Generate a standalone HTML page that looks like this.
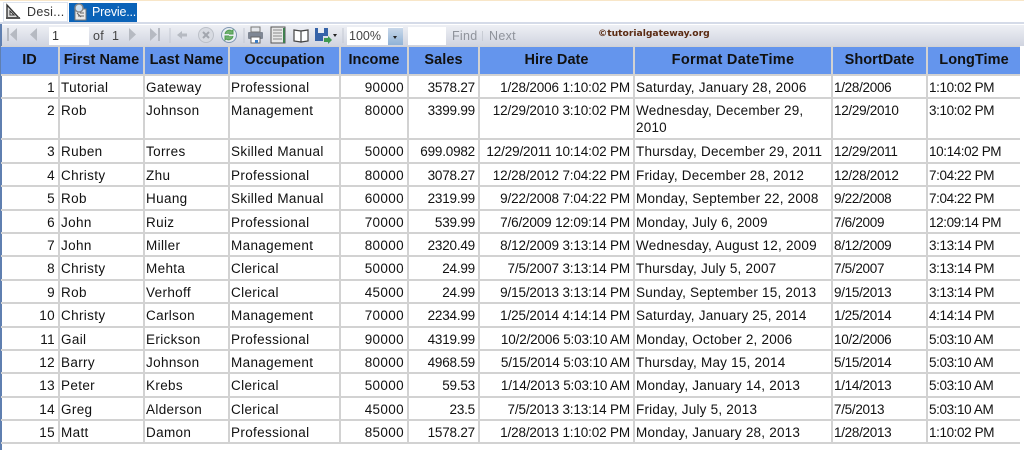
<!DOCTYPE html>
<html><head><meta charset="utf-8">
<style>
html,body{margin:0;padding:0;width:1024px;height:450px;overflow:hidden;background:#fff;font-family:"Liberation Sans",sans-serif}
.a{position:absolute}
table{position:absolute;left:1px;top:46px;border-collapse:collapse;table-layout:fixed;width:1019px;font-size:13.5px;letter-spacing:.35px;color:#111}
td,th{border:2px solid #d2d2d2;padding:3px 3px 0 1px;vertical-align:top;line-height:17px;overflow:hidden;white-space:nowrap;box-sizing:border-box}
th{background:#6495ed;font-size:14.5px;font-weight:bold;text-align:center;vertical-align:middle;padding:0;border-top:1px solid #d2d2d2;letter-spacing:.05px}
tr>*:first-child{border-left:0}
tr>*:last-child{border-right:0}
th:nth-child(8){letter-spacing:.3px}
td:nth-child(6){letter-spacing:-.2px}
td:nth-child(7){letter-spacing:-.15px}
td:nth-child(8){letter-spacing:.22px}
td:nth-child(9){letter-spacing:-.3px}
td:nth-child(10){letter-spacing:-.4px}
.r{text-align:right}
.w{white-space:normal}
tr{height:23.4px}
tr.h{height:28px}
tr.t{height:41.5px}
</style></head><body>
<div class="a" style="left:0;top:0;width:1024px;height:1px;background:#f8e6c8"></div>
<div class="a" style="left:0;top:22px;width:1024px;height:2px;background:#d5dbe8"></div>
<div class="a" style="left:0;top:24px;width:2px;height:426px;background:#5f7fb0"></div>
<!-- tabs -->
<div class="a" style="left:3px;top:2px;width:65px;height:20px;background:#fff;border:1px solid #dde3ee;box-sizing:border-box"></div>
<svg class="a" style="left:5px;top:3px" width="17" height="17" viewBox="0 0 17 17"><path d="M2 15V2l12 13z" fill="#ddd" stroke="#333" stroke-width="1.4"/><path d="M5 12V8l4 4z" fill="#fff" stroke="#333"/><rect x="1" y="14" width="14" height="2" fill="#555"/></svg>
<div class="a" style="left:27px;top:5px;font-size:12.5px;color:#333;letter-spacing:.3px">Desi...</div>
<div class="a" style="left:69px;top:3px;width:68px;height:19px;background:#0b63b8"></div>
<svg class="a" style="left:71px;top:3px" width="18" height="18" viewBox="0 0 18 18"><rect x="4" y="6" width="11" height="11" fill="#e8e8e8" stroke="#777"/><circle cx="8" cy="5" r="4" fill="#cfe0f0" stroke="#888" stroke-width="1.4"/><path d="M6 10l4 4M7 13h6M9 10h4" stroke="#666"/></svg>
<div class="a" style="left:92px;top:5px;font-size:12.5px;color:#fff;letter-spacing:-.2px">Previe...</div>
<!-- toolbar -->
<div class="a" style="left:2px;top:25px;width:1022px;height:21px;background:linear-gradient(#eef0f5,#d0d4e0)"></div>
<svg class="a" style="left:0;top:25px" width="345" height="21" viewBox="0 0 345 21">
<g fill="#b6bac2">
<rect x="7" y="3" width="2" height="13"/><path d="M17 3v13l-7-6.500z"/>
<path d="M37 3v13l-7-6.500z"/>
<path d="M129 3v13l7-6.500z"/>
<path d="M150 3v13l7-6.500z"/><rect x="158" y="3" width="2" height="13"/>
<path d="M177 10l5-4v2.500h5v3h-5v2.500z"/>
</g>
<path d="M170 3v15M244 3v15" stroke="#c4c8d2"/>
<circle cx="206" cy="10" r="7.500" fill="#d8dbe2" stroke="#bcc0c8"/><path d="M203 7l6 6M209 7l-6 6" stroke="#a2a6ae" stroke-width="2"/>
<circle cx="229" cy="10" r="7.500" fill="#e8edf3" stroke="#7e95b0"/><path d="M225 9a4.500 4.500 0 0 1 7-3l1-1v4h-4M233 11a4.500 4.500 0 0 1-7 3l-1 1v-4h4" fill="#6fb06f" stroke="#4f9d4f"/>
<rect x="248" y="7" width="15" height="7" rx="1" fill="#7f8794"/><rect x="251" y="2" width="9" height="5" fill="#e6e8ec" stroke="#777"/><rect x="251" y="12" width="9" height="6" fill="#fff" stroke="#666"/><rect x="255" y="15" width="3" height="3" fill="#3b7cc4"/>
<rect x="271" y="2" width="14" height="16" fill="#e8e8e8" stroke="#555"/><path d="M273 5h9M273 8h9M273 11h9M273 14h9" stroke="#888"/><rect x="283" y="3" width="2" height="15" fill="#3f7f4f"/>
<path d="M294 5l7 1v11l-7-1zM301 6l7-1v11l-7 1z" fill="#fff" stroke="#444" stroke-width="1.200"/>
<path d="M315 3h13v8h-5v5h-8z" fill="#3663a8"/><rect x="318" y="3" width="6" height="5" fill="#e8ecf2"/><path d="M324 13h4v-2l4 4-4 4v-2h-4z" fill="#3f9a4f"/>
<path d="M333 9h4l-2 3z" fill="#222"/>
<path d="M343 3v15" stroke="#c4c8d2"/>
</svg>
<div class="a" style="left:49px;top:27px;width:40px;height:18px;background:#fff"></div>
<div class="a" style="left:52px;top:29px;font-size:12.500px;color:#333">1</div>
<div class="a" style="left:93px;top:29px;font-size:12.500px;color:#444;letter-spacing:.3px">of</div>
<div class="a" style="left:112px;top:29px;font-size:12.500px;color:#444">1</div>
<div class="a" style="left:347px;top:27px;width:56px;height:18px;background:#fff"></div>
<div class="a" style="left:349px;top:29px;font-size:12.500px;color:#444">100%</div>
<div class="a" style="left:388px;top:28px;width:15px;height:17px;background:linear-gradient(#c9d8ea,#8fb2d6)"></div>
<div class="a" style="left:393px;top:36px;width:0;height:0;border:2.500px solid transparent;border-top:3px solid #222"></div>
<div class="a" style="left:408px;top:27px;width:38px;height:18px;background:#fff"></div>
<div class="a" style="left:452px;top:29px;font-size:12.500px;color:#8f939b;letter-spacing:.3px">Find</div>
<div class="a" style="left:482px;top:31px;width:1px;height:10px;background:#c8ccd4"></div>
<div class="a" style="left:489px;top:29px;font-size:12.500px;color:#8f939b;letter-spacing:.3px">Next</div>
<div class="a" style="left:598px;top:28px;font-family:'DejaVu Sans',sans-serif;font-weight:bold;font-size:9.2px;color:#5a2a12;white-space:nowrap">©tutorialgateway.org</div>
<table>
<colgroup><col style="width:58px"><col style="width:85px"><col style="width:85px"><col style="width:111px"><col style="width:68px"><col style="width:71px"><col style="width:155px"><col style="width:198px"><col style="width:95px"><col style="width:93px"></colgroup>
<tr class="h"><th>ID</th><th>First Name</th><th>Last Name</th><th>Occupation</th><th>Income</th><th>Sales</th><th>Hire Date</th><th>Format DateTime</th><th>ShortDate</th><th>LongTime</th></tr>
<tr><td class="r">1</td><td>Tutorial</td><td>Gateway</td><td>Professional</td><td class="r">90000</td><td class="r">3578.27</td><td class="r">1/28/2006 1:10:02 PM</td><td>Saturday, January 28, 2006</td><td>1/28/2006</td><td>1:10:02 PM</td></tr>
<tr class="t"><td class="r">2</td><td>Rob</td><td>Johnson</td><td>Management</td><td class="r">80000</td><td class="r">3399.99</td><td class="r">12/29/2010 3:10:02 PM</td><td class="w">Wednesday, December 29, 2010</td><td>12/29/2010</td><td>3:10:02 PM</td></tr>
<tr><td class="r">3</td><td>Ruben</td><td>Torres</td><td>Skilled Manual</td><td class="r">50000</td><td class="r">699.0982</td><td class="r">12/29/2011 10:14:02 PM</td><td>Thursday, December 29, 2011</td><td>12/29/2011</td><td>10:14:02 PM</td></tr>
<tr><td class="r">4</td><td>Christy</td><td>Zhu</td><td>Professional</td><td class="r">80000</td><td class="r">3078.27</td><td class="r">12/28/2012 7:04:22 PM</td><td>Friday, December 28, 2012</td><td>12/28/2012</td><td>7:04:22 PM</td></tr>
<tr><td class="r">5</td><td>Rob</td><td>Huang</td><td>Skilled Manual</td><td class="r">60000</td><td class="r">2319.99</td><td class="r">9/22/2008 7:04:22 PM</td><td>Monday, September 22, 2008</td><td>9/22/2008</td><td>7:04:22 PM</td></tr>
<tr><td class="r">6</td><td>John</td><td>Ruiz</td><td>Professional</td><td class="r">70000</td><td class="r">539.99</td><td class="r">7/6/2009 12:09:14 PM</td><td>Monday, July 6, 2009</td><td>7/6/2009</td><td>12:09:14 PM</td></tr>
<tr><td class="r">7</td><td>John</td><td>Miller</td><td>Management</td><td class="r">80000</td><td class="r">2320.49</td><td class="r">8/12/2009 3:13:14 PM</td><td>Wednesday, August 12, 2009</td><td>8/12/2009</td><td>3:13:14 PM</td></tr>
<tr><td class="r">8</td><td>Christy</td><td>Mehta</td><td>Clerical</td><td class="r">50000</td><td class="r">24.99</td><td class="r">7/5/2007 3:13:14 PM</td><td>Thursday, July 5, 2007</td><td>7/5/2007</td><td>3:13:14 PM</td></tr>
<tr><td class="r">9</td><td>Rob</td><td>Verhoff</td><td>Clerical</td><td class="r">45000</td><td class="r">24.99</td><td class="r">9/15/2013 3:13:14 PM</td><td>Sunday, September 15, 2013</td><td>9/15/2013</td><td>3:13:14 PM</td></tr>
<tr><td class="r">10</td><td>Christy</td><td>Carlson</td><td>Management</td><td class="r">70000</td><td class="r">2234.99</td><td class="r">1/25/2014 4:14:14 PM</td><td>Saturday, January 25, 2014</td><td>1/25/2014</td><td>4:14:14 PM</td></tr>
<tr><td class="r">11</td><td>Gail</td><td>Erickson</td><td>Professional</td><td class="r">90000</td><td class="r">4319.99</td><td class="r">10/2/2006 5:03:10 AM</td><td>Monday, October 2, 2006</td><td>10/2/2006</td><td>5:03:10 AM</td></tr>
<tr><td class="r">12</td><td>Barry</td><td>Johnson</td><td>Management</td><td class="r">80000</td><td class="r">4968.59</td><td class="r">5/15/2014 5:03:10 AM</td><td>Thursday, May 15, 2014</td><td>5/15/2014</td><td>5:03:10 AM</td></tr>
<tr><td class="r">13</td><td>Peter</td><td>Krebs</td><td>Clerical</td><td class="r">50000</td><td class="r">59.53</td><td class="r">1/14/2013 5:03:10 AM</td><td>Monday, January 14, 2013</td><td>1/14/2013</td><td>5:03:10 AM</td></tr>
<tr><td class="r">14</td><td>Greg</td><td>Alderson</td><td>Clerical</td><td class="r">45000</td><td class="r">23.5</td><td class="r">7/5/2013 3:13:14 PM</td><td>Friday, July 5, 2013</td><td>7/5/2013</td><td>5:03:10 AM</td></tr>
<tr><td class="r">15</td><td>Matt</td><td>Damon</td><td>Professional</td><td class="r">85000</td><td class="r">1578.27</td><td class="r">1/28/2013 1:10:02 PM</td><td>Monday, January 28, 2013</td><td>1/28/2013</td><td>1:10:02 PM</td></tr>
</table>
</body></html>
